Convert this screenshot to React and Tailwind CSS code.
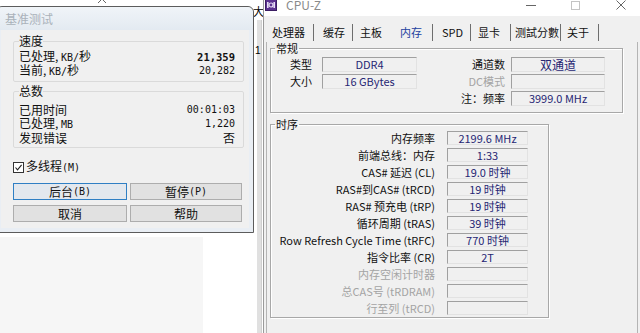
const MONO = "font-['DejaVu_Sans_Mono',monospace] text-[10px]";

function Row({ label, value, bold }) {
  return (
    <div className="flex justify-between items-center h-[14px] leading-[14px] pr-[3px]">
      <span>{label}</span>
      <span className={bold ? "font-['DejaVu_Sans_Mono',monospace] text-[10.5px] font-bold" : MONO}>{value}</span>
    </div>
  );
}

function Btn({ children, focus }) {
  return (
    <div
      className={
        "h-[17px] flex items-center justify-center text-[12px] leading-[14px] border " +
        (focus ? "border-[#2f7fc4] bg-[#e3e8ee]" : "border-[#adadad] bg-[#e1e1e1]")
      }
    >
      {children}
    </div>
  );
}

function Dialog() {
  return (
    <div className="absolute left-[-4px] top-[6px] w-[258px] h-[227px] border border-[#5c5c5c] rounded-t-[6px] bg-[#e9eef4] flex flex-col">
      <div className="h-[23px] flex items-center pl-[8px] text-[12px] text-[#aab2ba] bg-gradient-to-b from-[#f0f4f8] to-[#e3eaf1] rounded-t-[6px]">
        基准测试
      </div>
      <div className="mx-[4px] mb-[4px] flex-1 bg-[#f0f0f0] flex flex-col text-[12px] text-[#111]">
        <fieldset className="mt-[3px] ml-[12px] w-[231px] border border-[#dadada] rounded-[2px] px-[5px] pb-[3px]">
          <legend className="leading-[16px] px-0">速度</legend>
          <div className="mt-[1px]">
            <Row label={<>已处理, <span className={MONO}>KB/</span>秒</>} value="21,359" bold />
            <Row label={<>当前, <span className={MONO}>KB/</span>秒</>} value="20,282" />
          </div>
        </fieldset>
        <fieldset className="mt-[1px] ml-[12px] w-[231px] border border-[#dadada] rounded-[2px] px-[5px] pb-[2px]">
          <legend className="leading-[16px] px-0">总数</legend>
          <div className="mt-[4px]">
            <Row label="已用时间" value="00:01:03" />
            <Row label={<>已处理, <span className={MONO}>MB</span></>} value="1,220" />
            <div className="flex justify-between items-center h-[14px] leading-[14px] pr-[3px]">
              <span>发现错误</span>
              <span>否</span>
            </div>
          </div>
        </fieldset>
        <div className="mt-[12px] ml-[12px] h-[14px] flex items-center">
          <div className="w-[11px] h-[11px] border border-[#333] bg-white flex items-center justify-center">
            <svg width="9" height="9" viewBox="0 0 9 9">
              <polyline points="1.5,4.5 3.5,6.8 7.6,1.8" fill="none" stroke="#222" strokeWidth="1.1" />
            </svg>
          </div>
          <span className="ml-[2px] leading-[14px]">
            多线程<span className={MONO}>(M)</span>
          </span>
        </div>
        <div className="mt-[9px] ml-[12px] grid grid-cols-[114px_112px] gap-x-[3px] gap-y-[5px]">
          <Btn focus>
            后台<span className={MONO}>(B)</span>
          </Btn>
          <Btn>
            暂停<span className={MONO}>(P)</span>
          </Btn>
          <Btn>取消</Btn>
          <Btn>帮助</Btn>
        </div>
      </div>
    </div>
  );
}

function Bar() {
  return <span className="w-[1px] h-[17px] bg-[#6e6e6e]" />;
}

const timing = [
  ["内存频率", "2199.6 MHz", false],
  ["前端总线：内存", "1:33", false],
  ["CAS# 延迟 (CL)", "19.0 时钟", false],
  ["RAS#到CAS# (tRCD)", "19 时钟", false],
  ["RAS# 预充电 (tRP)", "19 时钟", false],
  ["循环周期 (tRAS)", "39 时钟", false],
  ["Row Refresh Cycle Time (tRFC)", "770 时钟", false],
  ["指令比率 (CR)", "2T", false],
  ["内存空闲计时器", "", true],
  ["总CAS号 (tRDRAM)", "", true],
  ["行至列 (tRCD)", "", true],
];

const FIELD =
  "border border-[#a0a0a0] border-r-[#e2e2e2] border-b-[#e2e2e2] bg-[#f0f0f0] text-center text-[#262673] flex items-center justify-center";

function CpuZ() {
  return (
    <div className="absolute left-[263px] top-[-6px] w-[380px] h-[345px] border-l border-[#9a9a9a] bg-[#f0f0f0] flex flex-col text-[11px] text-[#111]">
      {/* title bar */}
      <div className="h-[22px] bg-white flex items-center">
        <svg className="ml-[1px]" width="12" height="12" viewBox="0 0 12 12">
          <rect x="0" y="0" width="12" height="12" fill="#3b1d63" />
          <rect x="1" y="1" width="10" height="10" fill="#5b3290" />
          <rect x="2" y="3" width="1.6" height="6" fill="#e6dcf5" />
          <rect x="8.4" y="3" width="1.6" height="6" fill="#e6dcf5" />
          <circle cx="6" cy="6" r="2" fill="none" stroke="#e6dcf5" strokeWidth="1.2" />
        </svg>
        <span className="ml-[9px] text-[12px] leading-[14px] text-[#8a8a8a]">CPU-Z</span>
        <div className="flex-1" />
        <div className="w-[45px] h-full flex items-center justify-center">
          <span className="w-[10px] h-[1px] bg-[#666]" />
        </div>
        <div className="w-[45px] h-full flex items-center justify-center">
          <span className="w-[9px] h-[9px] border border-[#c4c4c4]" />
        </div>
        <div className="w-[45px] h-full flex items-center justify-center">
          <svg width="10" height="10" viewBox="0 0 10 10">
            <path d="M0.5 0.5 L9.5 9.5 M9.5 0.5 L0.5 9.5" stroke="#666" strokeWidth="1" />
          </svg>
        </div>
      </div>
      {/* tabs */}
      <div className="pt-[7px] pb-[1px] h-[26px] flex items-center pl-[8px] leading-[18px]">
        <span className="w-[41px]">处理器</span>
        <Bar />
        <span className="ml-[9px] w-[29px]">缓存</span>
        <Bar />
        <span className="ml-[7px] w-[40px]">主板</span>
        <span className="w-[32px] text-[#2342a0]">内存</span>
        <Bar />
        <span className="ml-[9px] w-[28px]">SPD</span>
        <Bar />
        <span className="ml-[7px] w-[32px]">显卡</span>
        <Bar />
        <span className="ml-[4px] w-[45px]">测試分數</span>
        <Bar />
        <span className="ml-[6px] w-[31px]">关于</span>
        <Bar />
      </div>
      {/* panel */}
      <div className="ml-[2px] w-[372px] flex-1 border border-t-0 border-[#b4b4b4] flex flex-col">
        <fieldset className="ml-[3px] w-[353px] border border-[#a8a8a8] shadow-[inset_1px_1px_0_#fff,1px_1px_0_#fff] pl-[4px] pb-[6px]">
          <legend className="leading-[12px] px-[1px]">常规</legend>
          <div className="mt-[3px] flex flex-col gap-[2px]">
            <div className="flex h-[15px] items-center">
              <span className="w-[37px] text-right">类型</span>
              <span className={"ml-[10px] w-[95px] h-[15px] " + FIELD}>DDR4</span>
              <span className="w-[88px] text-right">通道数</span>
              <span className={"ml-[6px] w-[94px] h-[15px] text-[12px] " + FIELD}>双通道</span>
            </div>
            <div className="flex h-[15px] items-center">
              <span className="w-[37px] text-right">大小</span>
              <span className={"ml-[10px] w-[95px] h-[15px] " + FIELD}>16 GBytes</span>
              <span className="w-[88px] text-right text-[#a4a4a4]">DC模式</span>
              <span className={"ml-[6px] w-[94px] h-[15px] " + FIELD}></span>
            </div>
            <div className="flex h-[15px] items-center">
              <span className="w-[37px]" />
              <span className="ml-[10px] w-[95px]" />
              <span className="w-[88px] text-right">注：频率</span>
              <span className={"ml-[6px] w-[94px] h-[15px] " + FIELD}>3999.0 MHz</span>
            </div>
          </div>
        </fieldset>
        <fieldset className="mt-[5px] ml-[3px] w-[279px] border border-[#a8a8a8] shadow-[inset_1px_1px_0_#fff,1px_1px_0_#fff] pl-[4px] pb-[2px]">
          <legend className="leading-[12px] px-[1px]">时序</legend>
          <div className="mt-[1px] flex flex-col gap-[3px]">
            {timing.map(([l, v, dis]) => (
              <div key={l} className="flex h-[14px] items-center">
                <span className={"w-[160px] text-right leading-[14px] " + (dis ? "text-[#a4a4a4]" : "")}>{l}</span>
                <span className={"ml-[12px] w-[81px] h-[14px] leading-[12px] " + FIELD}>{v}</span>
              </div>
            ))}
          </div>
        </fieldset>
      </div>
    </div>
  );
}

export default function App() {
  return (
    <div className="relative w-[640px] h-[333px] overflow-hidden bg-white font-['Noto_Sans_CJK_SC',sans-serif] text-black">
      <svg className="absolute left-[97px] top-[-3px]" width="10" height="7" viewBox="0 0 10 7">
        <polyline points="1,6 5,2 9,6" fill="none" stroke="#666" strokeWidth="1" />
      </svg>
      <div className="absolute left-0 top-[237px] w-[203px] h-[96px] bg-[#f6f6f6]" />
      <div className="absolute left-[257px] top-[20px] w-[5px] h-[313px] bg-[#e0e0e0] border-r border-[#cfcfcf]" />
      <span className="absolute left-[253px] top-[4px] text-[11px] leading-[14px]">大</span>
      <span className="absolute left-[255px] top-[45px] text-[10px] leading-[12px] font-['Liberation_Sans',sans-serif]">1</span>
      <Dialog />
      <CpuZ />
    </div>
  );
}
